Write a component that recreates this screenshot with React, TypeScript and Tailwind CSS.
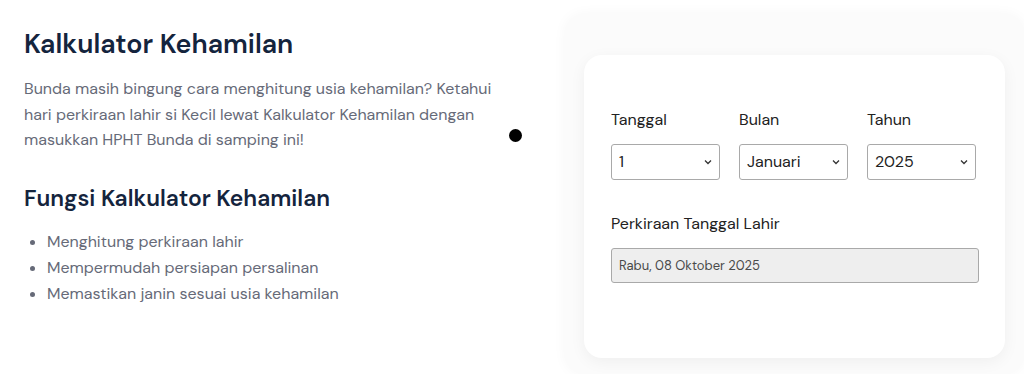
import React from "react";

const Chevron = () => (
  <svg
    className="absolute right-[7px] top-1/2 -translate-y-1/2"
    width="8"
    height="6"
    viewBox="0 0 8 6"
    fill="none"
  >
    <path d="M1 1.5L4 4.5L7 1.5" stroke="#333" strokeWidth="1.3" />
  </svg>
);

const SelectBox = ({ value }: { value: string }) => (
  <div className="relative flex h-[36px] w-[109px] items-center rounded-[3px] border border-[#a9a9a9] bg-white pl-[7px] text-[16px] text-[#222]">
    {value}
    <Chevron />
  </div>
);

const App = () => {
  return (
    <div
      className="relative flex h-[374px] w-[1024px] overflow-hidden bg-white"
      style={{ fontFamily: '"DM Sans", Inter, "Noto Sans", sans-serif' }}
    >
      {/* Intro column */}
      <div className="w-[565px] shrink-0 pl-6 pt-[28px]">
        <h1 className="text-[26.8px] font-semibold leading-[32px] text-[#14243d]">
          Kalkulator Kehamilan
        </h1>
        <p className="mt-[16px] w-[480px] text-[16px] leading-[25.5px] text-[#666a78]">
          Bunda masih bingung cara menghitung usia kehamilan? Ketahui hari
          perkiraan lahir si Kecil lewat Kalkulator Kehamilan dengan masukkan
          HPHT Bunda di samping ini!
        </p>
        <h2 className="mt-[31px] text-[22.8px] font-semibold leading-[28px] text-[#14243d]">
          Fungsi Kalkulator Kehamilan
        </h2>
        <ul className="mt-[17px] list-disc pl-[23px] text-[16px] leading-[26px] text-[#666a78] marker:text-[#666a78]">
          <li>Menghitung perkiraan lahir</li>
          <li>Mempermudah persiapan persalinan</li>
          <li>Memastikan janin sesuai usia kehamilan</li>
        </ul>
      </div>

      <div className="absolute left-[509px] top-[129px] h-[13px] w-[13px] rounded-full bg-black" />

      {/* Calculator panel */}
      <div className="mt-[14px] flex-1 rounded-[20px] bg-[#fbfbfb] pl-[19px] pt-[41px] shadow-[0_0_14px_rgba(0,0,0,0.04)]">
        <div className="h-[303px] w-[421px] rounded-[18px] bg-white px-[27px] pt-[55px] shadow-[0_4px_16px_rgba(0,0,0,0.05)]">
          <div className="flex gap-[19px]">
            <div className="flex flex-col gap-[14px]">
              <span className="text-[16px] leading-[20px] text-[#222]">Tanggal</span>
              <SelectBox value="1" />
            </div>
            <div className="flex flex-col gap-[14px]">
              <span className="text-[16px] leading-[20px] text-[#222]">Bulan</span>
              <SelectBox value="Januari" />
            </div>
            <div className="flex flex-col gap-[14px]">
              <span className="text-[16px] leading-[20px] text-[#222]">Tahun</span>
              <SelectBox value="2025" />
            </div>
          </div>
          <div className="mt-[34px] text-[16px] leading-[20px] text-[#222]">
            Perkiraan Tanggal Lahir
          </div>
          <div className="mt-[14px] flex h-[35px] w-[368px] items-center rounded-[3px] border border-[#a9a9a9] bg-[#eeeeee] pl-[7px] text-[13px] text-[#4a4a4a]">
            Rabu, 08 Oktober 2025
          </div>
        </div>
      </div>
    </div>
  );
};

export default App;
